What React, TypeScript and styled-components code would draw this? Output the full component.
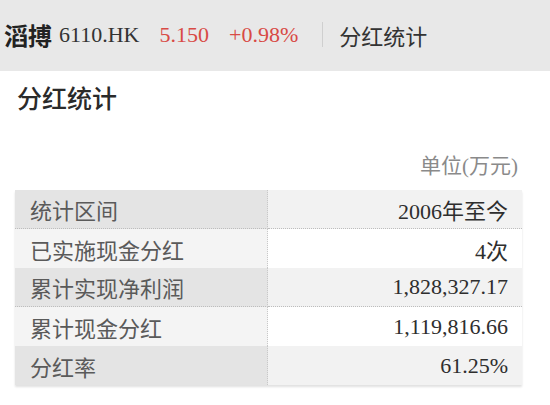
import React from "react";
import styled, { createGlobalStyle } from "styled-components";

const Global = createGlobalStyle`
  html, body { margin: 0; padding: 0; background: #ffffff; }
  body { font-family: "Liberation Serif", "Noto Sans CJK SC", serif; color: #333; }
`;

const Page = styled.div`
  width: 550px;
  height: 405px;
  overflow: hidden;
  background: #fff;
`;

const Header = styled.header`
  height: 71px;
  background: #e8e8e8;
  display: flex;
  align-items: center;
  padding-left: 4px;
  padding-bottom: 2px;
  box-sizing: border-box;
`;

const Name = styled.span`
  font-size: 24px;
  font-weight: 700;
  color: #222;
  margin-right: 7px;
`;

const Code = styled.span`
  font-size: 22px;
  color: #333;
  margin-right: 20px;
`;

const Quote = styled.span`
  font-size: 22px;
  color: #d84a45;
  margin-right: 20px;
`;

const Divider = styled.span`
  width: 1px;
  height: 25px;
  background: #cfcfcf;
  margin: 0 16px 0 4px;
`;

const HeaderTitle = styled.span`
  font-size: 22px;
  color: #333;
`;

const Title = styled.h1`
  margin: 0;
  padding: 14px 0 0 17px;
  font-size: 25px;
  line-height: 30px;
  font-weight: 500;
  color: #2a2a2a;
`;

const Unit = styled.div`
  margin: 36px 32px 0 0;
  text-align: right;
  font-size: 21px;
  line-height: 30px;
  color: #8a8a8a;
`;

const Table = styled.div`
  margin: 9px 28px 0 15px;
  display: grid;
  grid-template-columns: 253px 1fr;
  box-shadow: 0 2px 2px rgba(0, 0, 0, 0.12);
`;

const Cell = styled.div<{ $shade: boolean; $key?: boolean; $dotted: boolean }>`
  height: 39px;
  box-sizing: border-box;
  display: flex;
  align-items: center;
  font-size: 22px;
  padding: 0 14px 0 15px;
  justify-content: ${(p) => (p.$key ? "flex-start" : "flex-end")};
  color: ${(p) => (p.$key ? "#5a5a5a" : "#2e2e2e")};
  background: ${(p) =>
    p.$key ? (p.$shade ? "#e4e4e4" : "#f4f4f4") : p.$shade ? "#f2f2f2" : "#ffffff"};
  border-right: ${(p) => (p.$key ? "1px dotted #c8c8c8" : "none")};
  border-bottom: ${(p) => (p.$dotted ? "1px dotted #bdbdbd" : "none")};
`;

const rows = [
  ["统计区间", "2006年至今"],
  ["已实施现金分红", "4次"],
  ["累计实现净利润", "1,828,327.17"],
  ["累计现金分红", "1,119,816.66"],
  ["分红率", "61.25%"],
];

export default function App() {
  return (
    <Page>
      <Global />
      <Header>
        <Name>滔搏</Name>
        <Code>6110.HK</Code>
        <Quote>5.150</Quote>
        <Quote>+0.98%</Quote>
        <Divider />
        <HeaderTitle>分红统计</HeaderTitle>
      </Header>
      <Title>分红统计</Title>
      <Unit>单位(万元)</Unit>
      <Table>
        {rows.map(([k, v], i) => {
          const shade = i % 2 === 0;
          const dotted = shade && i < rows.length - 1;
          return (
            <React.Fragment key={k}>
              <Cell $key $shade={shade} $dotted={dotted}>
                {k}
              </Cell>
              <Cell $shade={shade} $dotted={dotted}>
                {v}
              </Cell>
            </React.Fragment>
          );
        })}
      </Table>
    </Page>
  );
}
